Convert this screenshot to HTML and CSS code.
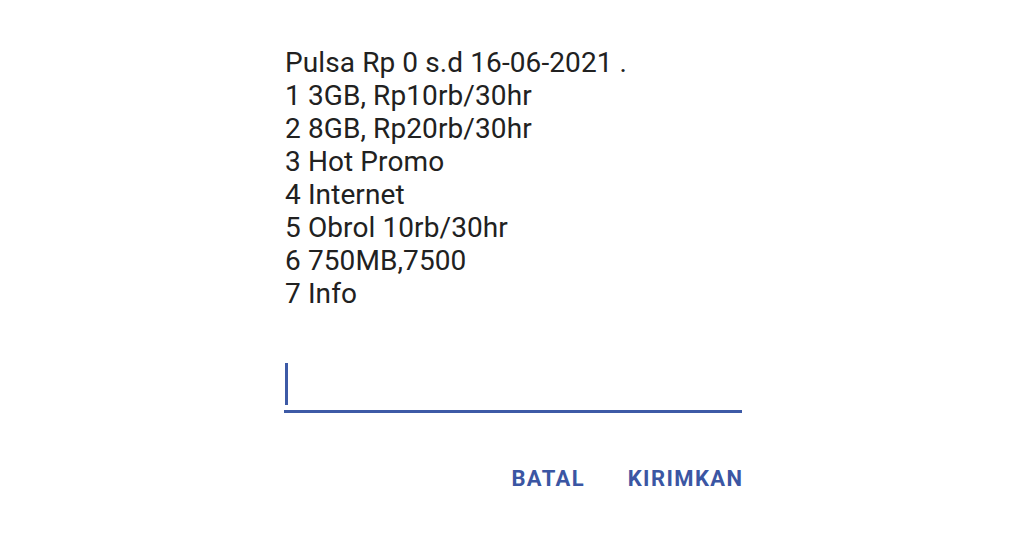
FILE: index.html
```html
<!DOCTYPE html>
<html lang="id">
<head>
<meta charset="utf-8">
<title>USSD</title>
<link rel="stylesheet" href="styles.css">
</head>
<body>
<div class="dialog">
  <div class="message">
    <div>Pulsa Rp 0 s.d 16-06-2021 .</div>
    <div>1 3GB, Rp10rb/30hr</div>
    <div>2 8GB, Rp20rb/30hr</div>
    <div>3 Hot Promo</div>
    <div>4 Internet</div>
    <div>5 Obrol 10rb/30hr</div>
    <div>6 750MB,7500</div>
    <div>7 Info</div>
  </div>
  <div class="field"><span class="cursor"></span></div>
  <div class="actions">
    <span class="btn">BATAL</span>
    <span class="btn">KIRIMKAN</span>
  </div>
</div>
</body>
</html>
```

FILE: styles.css
```css
html, body {
  margin: 0;
  padding: 0;
  background: #ffffff;
}
body {
  width: 1024px;
  height: 538px;
  overflow: hidden;
  font-family: Roboto, "Liberation Sans", sans-serif;
}
.dialog {
  width: 458px;
  margin-left: 284px;
  padding-top: 46px;
}
.message {
  font-size: 28px;
  line-height: 33px;
  color: #212121;
  letter-spacing: 0.1px;
  padding-left: 1px;
}
.field {
  margin-top: 53px;
  height: 47px;
  border-bottom: 3px solid #3d5aa6;
  display: flex;
  align-items: flex-start;
}
.cursor {
  display: block;
  width: 3px;
  height: 42px;
  margin-left: 1px;
  background: #3d5aa6;
}
.actions {
  margin-top: 53px;
  display: flex;
  justify-content: flex-end;
  gap: 44px;
}
.btn {
  font-size: 22px;
  line-height: 25px;
  font-weight: 700;
  color: #3b56a3;
  letter-spacing: 1.4px;
  margin-right: -1.4px;
}
```
